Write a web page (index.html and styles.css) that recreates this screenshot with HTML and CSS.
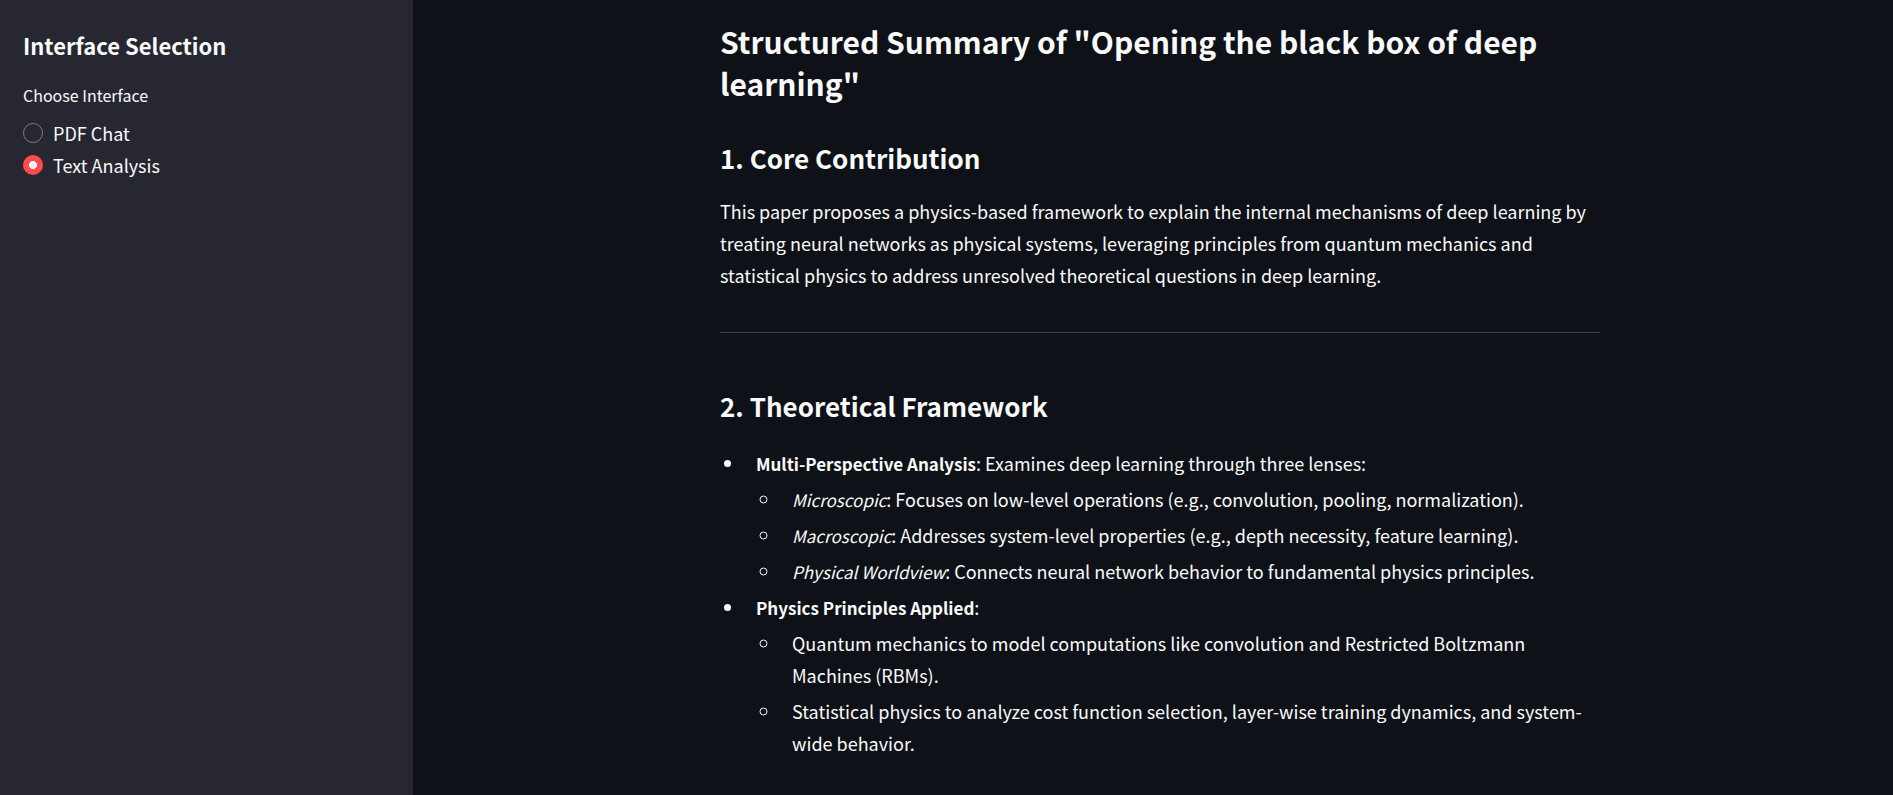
FILE: index.html
```html
<!DOCTYPE html>
<html lang="en">
<head>
<meta charset="utf-8">
<meta name="viewport" content="width=device-width, initial-scale=1">
<title>Text Analysis</title>
<link rel="stylesheet" href="styles.css">
</head>
<body>
<div class="app">
  <aside class="sidebar">
    <h3 class="sidebar-title">Interface Selection</h3>
    <fieldset class="radio-group">
      <legend class="radio-legend">Choose Interface</legend>
      <label class="radio"><input class="radio-input" type="radio" name="interface" value="pdf">PDF Chat</label>
      <label class="radio"><input class="radio-input" type="radio" name="interface" value="text" checked>Text Analysis</label>
    </fieldset>
  </aside>
  <main class="main">
    <article class="summary">
      <h1 class="title">Structured Summary of "Opening the black box of deep learning"</h1>
      <h2 class="heading">1. Core Contribution</h2>
      <p class="text">This paper proposes a physics-based framework to explain the internal mechanisms of deep learning by treating neural networks as physical systems, leveraging principles from quantum mechanics and statistical physics to address unresolved theoretical questions in deep learning.</p>
      <hr class="divider">
      <h2 class="heading">2. Theoretical Framework</h2>
      <ul class="list">
        <li class="item"><strong class="term">Multi-Perspective Analysis</strong>: Examines deep learning through three lenses:
          <ul class="sublist">
            <li class="item"><em class="term">Microscopic</em>: Focuses on low-level operations (e.g., convolution, pooling, normalization).</li>
            <li class="item"><em class="term">Macroscopic</em>: Addresses system-level properties (e.g., depth necessity, feature learning).</li>
            <li class="item"><em class="term">Physical Worldview</em>: Connects neural network behavior to fundamental physics principles.</li>
          </ul>
        </li>
        <li class="item"><strong class="term">Physics Principles Applied</strong>:
          <ul class="sublist">
            <li class="item">Quantum mechanics to model computations like convolution and Restricted Boltzmann Machines (RBMs).</li>
            <li class="item">Statistical physics to analyze cost function selection, layer-wise training dynamics, and system-wide behavior.</li>
          </ul>
        </li>
      </ul>
    </article>
  </main>
</div>
</body>
</html>
```
FILE: styles.css
```css
* {
  box-sizing: border-box;
}

body {
  margin: 0;
  background: #0e1117;
  color: #fafafa;
  font-family: "Source Sans Pro", "Noto Sans CJK SC", sans-serif;
  font-size: 18px;
  line-height: 32px;
}

.app {
  display: flex;
  min-height: 100vh;
}

.sidebar {
  flex: 0 0 413px;
  padding: 30px 23px;
  background: #262730;
}

.sidebar-title {
  margin: 0 0 23px;
  font-size: 22px;
  line-height: 30px;
  font-weight: 600;
}

.radio-group {
  margin: 0;
  padding: 0;
  border: 0;
}

.radio-legend {
  margin-bottom: 10px;
  padding: 0;
  font-size: 16px;
  line-height: 24px;
}

.radio {
  display: flex;
  align-items: center;
  gap: 10px;
}

.radio-input {
  appearance: none;
  width: 20px;
  height: 20px;
  margin: 0;
  border: 1px solid #7b7c83;
  border-radius: 50%;
}

.radio-input:checked {
  border: 0;
  background: radial-gradient(circle, #f0f2f6 0 4px, #ff4b4b 4px);
}

.main {
  flex: 1;
  padding: 20px 20px 32px 34px;
}

.summary {
  max-width: 880px;
  margin: 0 auto;
}

.title {
  margin: 0 0 36px;
  font-size: 30px;
  line-height: 42px;
  font-weight: 600;
}

.heading {
  margin: 0 0 19px;
  font-size: 26px;
  line-height: 36px;
  font-weight: 600;
}

.text {
  margin: 0;
}

.divider {
  height: 1px;
  margin: 41px 0 55px;
  border: 0;
  background: #3e4045;
}

.list,
.sublist {
  margin: 0;
  padding: 0;
}

.list {
  margin-top: 23px;
}

.item {
  margin: 0 0 4px 25px;
  padding-left: 11px;
}

.sublist {
  padding-top: 4px;
}

.term {
  font-size: 17px;
  line-height: 24px;
}
```
